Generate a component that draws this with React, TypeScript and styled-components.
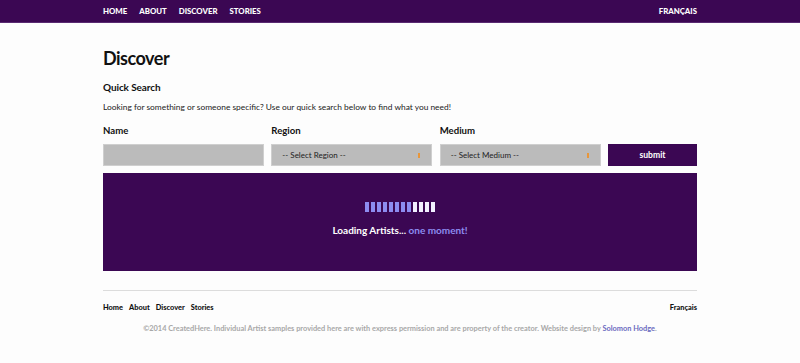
import React from 'react';
import styled, { createGlobalStyle } from 'styled-components';

const GlobalStyle = createGlobalStyle`
  html, body {
    margin: 0;
    padding: 0;
    background: #fdfdfd;
    font-family: Lato, "Open Sans", sans-serif;
    color: #111;
  }
`;

const NavBar = styled.nav`
  height: 22px;
  background-color: #3b0753;
  border-bottom: 1px solid #5a2a72;
`;

const Wrap = styled.div`
  width: 594px;
  margin: 0 auto;
`;

const NavInner = styled(Wrap)`
  display: flex;
  justify-content: space-between;
  align-items: center;
  height: 22px;
`;

const NavLinks = styled.div`
  display: flex;
  gap: 12px;
`;

const NavLink = styled.a`
  color: #fff;
  font-size: 7.8px;
  font-weight: 900;
  text-transform: uppercase;
  text-decoration: none;
`;

const Main = styled(Wrap)`
  padding-top: 23px;
`;

const Title = styled.h1`
  font-size: 18px;
  font-weight: 700;
  margin: 0 0 10px;
  line-height: 24px;
  letter-spacing: -0.5px;
`;

const SubTitle = styled.h2`
  font-size: 10px;
  font-weight: 700;
  margin: 0 0 7px;
  line-height: 14px;
  letter-spacing: -0.1px;
`;

const Intro = styled.p`
  font-size: 8.4px;
  margin: 0 0 11px;
  line-height: 12px;
  color: #222;
`;

const SearchGrid = styled.div`
  display: grid;
  grid-template-columns: 161px 161px 161px 89px;
  justify-content: space-between;
  row-gap: 6px;
  align-items: end;
`;

const Label = styled.label`
  font-size: 9.6px;
  font-weight: 700;
  line-height: 14px;
`;

const Field = styled.div`
  position: relative;
  height: 22px;
  background: #bbbbbb;
  border: 1px solid #cfcfcf;
  box-sizing: border-box;
  font-size: 8px;
  color: #222;
  display: flex;
  align-items: center;
  padding-left: 10px;
`;

const Arrow = styled.span`
  position: absolute;
  right: 11px;
  top: 8px;
  width: 2px;
  height: 5px;
  background: #e8963a;
`;

const Submit = styled.button`
  height: 22px;
  border: none;
  background: #3b0753;
  color: #fff;
  font-family: inherit;
  font-size: 8.6px;
  font-weight: 700;
  padding: 0;
`;

const LoadingPanel = styled.div`
  margin-top: 7px;
  height: 98px;
  background: #3b0753;
  display: flex;
  flex-direction: column;
  align-items: center;
  padding-top: 29px;
  box-sizing: border-box;
`;

const Bars = styled.div`
  display: flex;
  gap: 2px;
`;

const Bar = styled.span<{ $done: boolean }>`
  width: 4px;
  height: 10px;
  background: ${p => (p.$done ? '#8d8cf0' : '#f2f0ff')};
`;

const LoadingText = styled.div`
  margin-top: 12px;
  font-size: 10px;
  font-weight: 700;
  color: #fff;
`;

const Moment = styled.span`
  color: #8d8cf0;
`;

const Footer = styled(Wrap)`
  margin-top: 19px;
  border-top: 1px solid #dcdcdc;
  padding-top: 11px;
`;

const FooterRow = styled.div`
  display: flex;
  justify-content: space-between;
  align-items: center;
  line-height: 11px;
`;

const FooterLinks = styled.div`
  display: flex;
  gap: 6px;
`;

const FooterLink = styled.a`
  font-size: 7.4px;
  font-weight: 900;
  color: #111;
  text-decoration: none;
`;

const Copyright = styled.p`
  margin: 10px 0 0;
  text-align: center;
  font-size: 7.4px;
  font-weight: 700;
  line-height: 11px;
  color: #a8a8a8;
`;

const Credit = styled.a`
  color: #6b6bc0;
  text-decoration: none;
`;

const App: React.FC = () => {
  const bars = Array.from({ length: 12 }, (_, i) => i < 8);
  return (
    <>
      <GlobalStyle />
      <NavBar>
        <NavInner>
          <NavLinks>
            <NavLink>Home</NavLink>
            <NavLink>About</NavLink>
            <NavLink>Discover</NavLink>
            <NavLink>Stories</NavLink>
          </NavLinks>
          <NavLink>Français</NavLink>
        </NavInner>
      </NavBar>
      <Main>
        <Title>Discover</Title>
        <SubTitle>Quick Search</SubTitle>
        <Intro>Looking for something or someone specific? Use our quick search below to find what you need!</Intro>
        <SearchGrid>
          <Label>Name</Label>
          <Label>Region</Label>
          <Label>Medium</Label>
          <span />
          <Field />
          <Field>
            -- Select Region --
            <Arrow />
          </Field>
          <Field>
            -- Select Medium --
            <Arrow />
          </Field>
          <Submit>submit</Submit>
        </SearchGrid>
        <LoadingPanel>
          <Bars>
            {bars.map((done, i) => (
              <Bar key={i} $done={done} />
            ))}
          </Bars>
          <LoadingText>
            Loading Artists... <Moment>one moment!</Moment>
          </LoadingText>
        </LoadingPanel>
      </Main>
      <Footer>
        <FooterRow>
          <FooterLinks>
            <FooterLink>Home</FooterLink>
            <FooterLink>About</FooterLink>
            <FooterLink>Discover</FooterLink>
            <FooterLink>Stories</FooterLink>
          </FooterLinks>
          <FooterLink>Français</FooterLink>
        </FooterRow>
        <Copyright>
          ©2014 CreatedHere. Individual Artist samples provided here are with express permission and are property of the creator. Website design by <Credit>Solomon Hodge</Credit>.
        </Copyright>
      </Footer>
    </>
  );
};

export default App;
